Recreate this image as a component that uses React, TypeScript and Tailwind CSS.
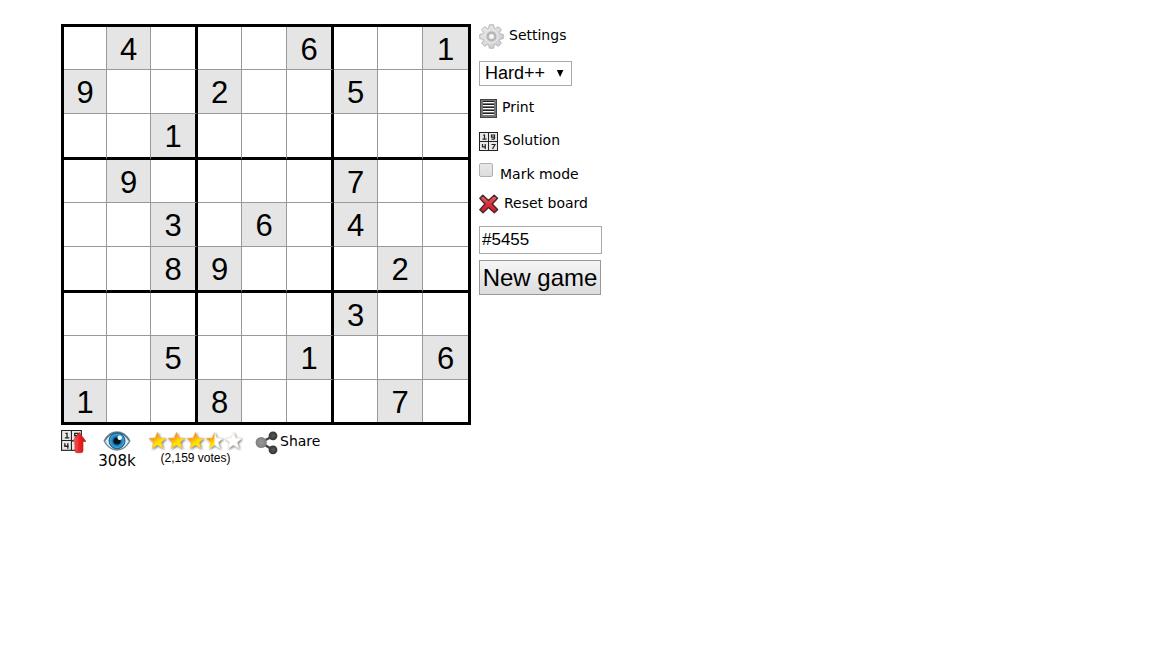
import { useState } from "react";

const givens = [
  ".4...6..1",
  "9..2..5..",
  "..1......",
  ".9....7..",
  "..3.6.4..",
  "..89...2.",
  "......3..",
  "..5..1..6",
  "1..8...7.",
];

const columnWidths = [
  "w-[43px]",
  "w-[44px]",
  "w-[47px]",
  "w-[44px]",
  "w-[45px]",
  "w-[47px]",
  "w-[44px]",
  "w-[45px]",
  "w-[45px]",
];

const rowHeights = [
  "h-[43px]",
  "h-[44px]",
  "h-[46px]",
  "h-[43px]",
  "h-[44px]",
  "h-[46px]",
  "h-[43px]",
  "h-[44px]",
  "h-[42px]",
];

function rightEdge(col: number) {
  if (col === 8) return "";
  return col % 3 === 2 ? "border-r-[3px] border-r-black" : "border-r border-r-[#999]";
}

function bottomEdge(row: number) {
  if (row === 8) return "";
  return row % 3 === 2 ? "border-b-[3px] border-b-black" : "border-b border-b-[#999]";
}

function Board() {
  return (
    <table className="table-fixed border-separate border-spacing-0 border-[3px] border-black font-['Liberation_Sans',Arial,sans-serif] text-[31px] leading-9">
      <colgroup>
        {columnWidths.map((width, i) => (
          <col key={i} className={width} />
        ))}
      </colgroup>
      <tbody>
        {givens.map((line, row) => (
          <tr key={row} className={rowHeights[row]}>
            {line.split("").map((value, col) => (
              <td
                key={col}
                className={`p-0 pt-[3px] text-center align-middle ${rightEdge(col)} ${bottomEdge(row)} ${
                  value === "." ? "bg-white" : "bg-[#e5e5e5]"
                }`}
              >
                {value === "." ? "" : value}
              </td>
            ))}
          </tr>
        ))}
      </tbody>
    </table>
  );
}

function GearIcon() {
  return (
    <svg viewBox="0 0 25 25" className="size-[25px] shrink-0" aria-hidden="true">
      <defs>
        <linearGradient id="gear" x1="0" y1="0" x2="1" y2="1">
          <stop offset="0" stopColor="#ececec" />
          <stop offset="1" stopColor="#cacaca" />
        </linearGradient>
      </defs>
      <path
        d="M10.4.8h4.2l.6 3 1.500.7 2.600-1.800 3 3-1.800 2.600.7 1.500 3 .6v4.200l-3 .6-.7 1.500 1.800 2.600-3 3-2.600-1.800-1.500.7-.6 3h-4.200l-.6-3-1.500-.7-2.600 1.800-3-3 1.800-2.600-.7-1.500-3-.6v-4.200l3-.6.7-1.500-1.800-2.600 3-3 2.600 1.800 1.500-.7z"
        fill="url(#gear)"
        stroke="#b3b3b3"
        strokeLinejoin="round"
      />
      <circle cx="12.500" cy="12.500" r="6.500" fill="#dadada" stroke="#e8e8e8" />
      <circle cx="12.500" cy="12.500" r="3.800" fill="#e8e8e8" stroke="#b4b4b4" strokeWidth="2.200" />
      <circle cx="12.500" cy="12.500" r="1.800" fill="#f8f8f8" />
    </svg>
  );
}

function PrintIcon() {
  return (
    <svg viewBox="0 0 17 19" className="h-[19px] w-[17px] shrink-0" aria-hidden="true">
      <rect x=".5" y=".5" width="16" height="18" fill="#777" stroke="#444" />
      <path d="M3 3.500h11M3 6.500h11M3 9.500h11M3 12.500h11M3 15.500h11" stroke="#fff" />
      <path d="M3 2.500h11M3 5.500h11M3 8.500h11M3 11.500h11M3 14.500h11" stroke="#222" />
    </svg>
  );
}

function DigitGrid() {
  return (
    <>
      <rect width="19" height="19" fill="#222" />
      <path d="M1 1h8v8H1zM10 1h8v8h-8zM1 10h8v8H1zM10 10h8v8h-8z" fill="#e8e8e8" />
      <path
        d="M4 3h1.500v4M3.500 7.200h4M15.500 7V3h-3v2.200h3M12.500 7.200h3M3.500 12v2.800H7M6.200 12v5M12.500 12.500H16L13.500 17"
        fill="none"
        stroke="#222"
        strokeWidth="1.200"
      />
    </>
  );
}

function SolutionIcon() {
  return (
    <svg viewBox="0 0 19 19" className="size-[19px] shrink-0" aria-hidden="true">
      <DigitGrid />
    </svg>
  );
}

function ResetIcon() {
  return (
    <svg viewBox="0 0 20 20" className="size-5 shrink-0" aria-hidden="true">
      <defs>
        <linearGradient id="cross" x1="0" y1="0" x2="0" y2="1">
          <stop offset="0" stopColor="#ef6b70" />
          <stop offset=".5" stopColor="#dc2f38" />
          <stop offset="1" stopColor="#c9202a" />
        </linearGradient>
      </defs>
      <path
        d="M3.800 1.300 9.500 6.500 15.200 1.200 18.500 4.200 13.200 10l5.300 5.600-3.200 3.100L9.500 13.500 4 18.700.9 15.800 6 10 .9 4.200z"
        fill="url(#cross)"
        stroke="#4a2a2d"
        strokeWidth="1.500"
        strokeLinejoin="round"
      />
    </svg>
  );
}

function UploadIcon() {
  return (
    <svg viewBox="0 0 25 25" className="size-[25px]" aria-hidden="true">
      <defs>
        <linearGradient id="arrow" x1="0" y1="0" x2="1" y2="0">
          <stop offset="0" stopColor="#ff7070" />
          <stop offset=".5" stopColor="#ee2222" />
          <stop offset="1" stopColor="#c80f0f" />
        </linearGradient>
      </defs>
      <g transform="translate(0 1) scale(1.1)">
        <DigitGrid />
      </g>
      <path
        d="M18.300 3.500 25 12.500H22V21.500q0 2.200-2 2.200h-4q-2 0-2-2.200V12.500H11.500z"
        fill="url(#arrow)"
        stroke="#a83030"
        strokeWidth=".7"
        strokeLinejoin="round"
      />
    </svg>
  );
}

function EyeIcon() {
  return (
    <svg viewBox="0 0 28 20" className="h-5 w-7" aria-hidden="true">
      <defs>
        <radialGradient id="iris">
          <stop offset="0" stopColor="#0a3a60" />
          <stop offset=".55" stopColor="#1778b5" />
          <stop offset=".85" stopColor="#3aa5dc" />
          <stop offset="1" stopColor="#145a8c" />
        </radialGradient>
      </defs>
      <path
        d="M1.200 10Q6 1 14 1T26.800 10Q22 19 14 19T1.200 10z"
        fill="#dfebf1"
        stroke="#6d8796"
        strokeWidth="1.500"
      />
      <path d="M2 9.500Q6.500 1.800 14 1.800t12 7.700" fill="none" stroke="#4c7187" strokeWidth="1.300" />
      <circle cx="14" cy="9.800" r="8" fill="url(#iris)" stroke="#174d70" strokeWidth=".8" />
      <circle cx="14" cy="10" r="3.600" fill="#07131e" />
      <circle cx="16.700" cy="6.700" r="2.200" fill="#fff" />
    </svg>
  );
}

const starPath =
  "M9.500 1.200 11.800 7 18 7.300 13.200 11.300 15 17.600 9.500 14 4 17.600 5.500 11.300.8 7.300 7 7z";

function Stars() {
  return (
    <svg viewBox="0 0 95 20" className="h-5 w-[95px]" role="img" aria-label="3.5 out of 5 stars">
      <defs>
        <linearGradient id="gold" x1="0" y1="0" x2=".7" y2="1">
          <stop offset=".1" stopColor="#f07a28" />
          <stop offset=".4" stopColor="#f99f14" />
          <stop offset=".65" stopColor="#ffdf00" />
          <stop offset="1" stopColor="#fff200" />
        </linearGradient>
        <clipPath id="half">
          <rect width="9.500" height="20" />
        </clipPath>
        <filter id="shade" x="-20%" y="-20%" width="150%" height="150%">
          <feDropShadow dx="1" dy="1" stdDeviation=".8" floodColor="#555" floodOpacity=".8" />
        </filter>
      </defs>
      {[0, 1, 2, 3, 4].map((i) => (
        <g key={i} transform={`translate(${i * 19} 0)`}>
          <path
            d={starPath}
            fill={i < 3 ? "url(#gold)" : "#fff"}
            stroke={i < 3 ? "#f0b060" : "#e8ddd6"}
            strokeWidth=".5"
            filter="url(#shade)"
          />
          {i === 3 && <path d={starPath} fill="url(#gold)" clipPath="url(#half)" />}
        </g>
      ))}
    </svg>
  );
}

function ShareIcon() {
  return (
    <svg viewBox="0 0 24 24" className="size-6" aria-hidden="true">
      <defs>
        <radialGradient id="dark">
          <stop offset="0" stopColor="#5a5a5a" />
          <stop offset="1" stopColor="#333" />
        </radialGradient>
        <radialGradient id="pale">
          <stop offset="0" stopColor="#999" />
          <stop offset="1" stopColor="#808080" />
        </radialGradient>
      </defs>
      <path d="M18 5 6 11.500 18 19" fill="none" stroke="#444" strokeWidth="2.400" />
      <circle cx="18" cy="4.800" r="4.400" fill="url(#dark)" />
      <circle cx="18" cy="18.800" r="4.400" fill="url(#dark)" />
      <circle cx="6.200" cy="11.500" r="5.600" fill="url(#pale)" />
    </svg>
  );
}

function StatsBar() {
  return (
    <div className="mt-1 flex items-start">
      <button type="button" aria-label="Upload puzzle" className="w-[37px]">
        <UploadIcon />
      </button>
      <div className="mt-0.5 flex w-[38px] flex-col items-center text-[15px] leading-5">
        <EyeIcon />
        <span>308k</span>
      </div>
      <div className="ml-3 mt-0.5 flex w-[95px] flex-col items-center font-['Liberation_Sans',Arial,sans-serif] text-[12px] leading-[14px]">
        <Stars />
        <span className="whitespace-nowrap">(2,159 votes)</span>
      </div>
      <a href="#share" className="ml-3 mt-0.5 flex items-start gap-px">
        <ShareIcon />
        <span className="leading-5">Share</span>
      </a>
    </div>
  );
}

function Sidebar() {
  const [level, setLevel] = useState("Hard++");
  const [marking, setMarking] = useState(false);
  const [gameId, setGameId] = useState("#5455");

  return (
    <div className="flex flex-col items-start">
      <button type="button" className="flex items-start gap-[5px]">
        <GearIcon />
        <span className="leading-[22px]">Settings</span>
      </button>

      <div className="relative mt-3 font-['Liberation_Sans',Arial,sans-serif]">
        <select
          aria-label="Difficulty"
          value={level}
          onChange={(e) => setLevel(e.target.value)}
          className="h-[25px] w-[93px] appearance-none border border-[#a9a9a9] bg-white pb-0.5 pl-[5px] text-[18px] leading-5"
        >
          <option>Easy</option>
          <option>Medium</option>
          <option>Hard</option>
          <option>Hard++</option>
        </select>
        <svg viewBox="0 0 8 7" className="pointer-events-none absolute right-2 top-[9px] h-[7px] w-2" aria-hidden="true">
          <path d="M.8 0h6.600L4.100 7z" />
        </svg>
      </div>

      <button type="button" className="mt-[13px] flex items-start gap-[5px] pl-px">
        <PrintIcon />
        <span className="leading-4">Print</span>
      </button>

      <button type="button" className="mt-3.5 flex items-start gap-[5px]">
        <SolutionIcon />
        <span className="leading-4">Solution</span>
      </button>

      <label className="mt-3 flex items-start gap-[7px]">
        <input
          type="checkbox"
          checked={marking}
          onChange={(e) => setMarking(e.target.checked)}
          className="size-3.5 appearance-none rounded-xs border border-[#b0b0b0] bg-linear-to-b from-[#e8e8e8] to-[#dcdcdc] checked:bg-gray-500"
        />
        <span className="pt-0.5 leading-[18px]">Mark mode</span>
      </label>

      <button type="button" className="mt-[11px] flex items-start gap-[5px]">
        <ResetIcon />
        <span className="leading-[18px]">Reset board</span>
      </button>

      <div className="mt-3 flex flex-col items-start gap-1.5 font-['Liberation_Sans',Arial,sans-serif]">
        <input
          type="text"
          aria-label="Game number"
          value={gameId}
          onChange={(e) => setGameId(e.target.value)}
          className="h-7 w-[123px] border border-[#a9a9a9] bg-white px-0.5 text-[17px]"
        />
        <button
          type="button"
          className="h-[35px] w-[122px] whitespace-nowrap border border-[#999] bg-linear-to-b from-[#f6f6f6] to-[#dcdcdc] text-[24px] leading-8"
        >
          New game
        </button>
      </div>
    </div>
  );
}

export default function App() {
  return (
    <main className="flex min-h-screen items-start gap-2 bg-white pl-[61px] pt-6 font-['DejaVu_Sans',Verdana,sans-serif] text-sm text-black">
      <div>
        <Board />
        <StatsBar />
      </div>
      <Sidebar />
    </main>
  );
}
